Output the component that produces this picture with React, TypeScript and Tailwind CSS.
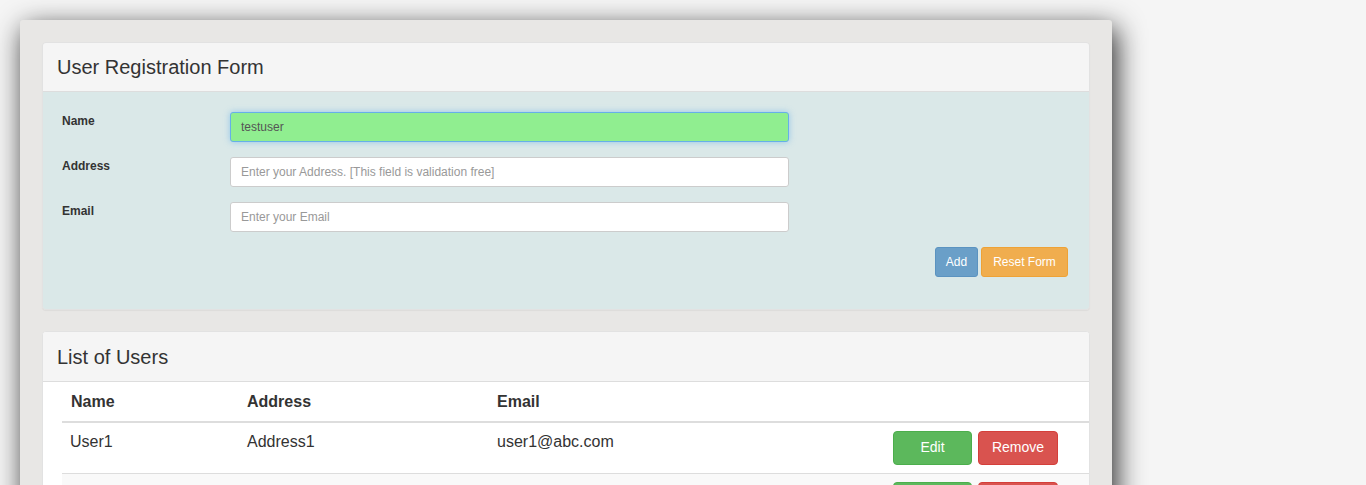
const users = [
  { name: 'User1', address: 'Address1', email: 'user1@abc.com' },
  { name: 'User2', address: 'Address2', email: 'user2@abc.com' },
];

export default function App() {
  return (
    <div className="min-h-screen bg-[#f5f5f5] p-5 font-['Liberation_Sans',Arial,sans-serif] text-[#333]">
      <div className="w-[1092px] rounded-[3px] bg-[#e8e7e5] p-[22px] shadow-[4px_8px_28px_rgba(0,0,0,0.85)]">
        {/* Registration form */}
        <div className="overflow-hidden rounded-[4px] border border-[#e2e2e2] shadow-[0_1px_1px_rgba(0,0,0,0.05)]">
          <div className="h-[49px] border-b border-[#ddd] bg-[#f5f5f5] px-[14px] pt-[12px] text-[20px] leading-[24px]">
            User Registration Form
          </div>
          <div className="bg-[#dae8e8] pl-[19px] pr-5 pt-5 pb-8">
            <div className="flex flex-col gap-[15px]">
              <div className="flex items-start">
                <label className="w-[168px] pt-[1px] text-[12px] font-bold leading-[16px]">Name</label>
                <input
                  defaultValue="testuser"
                  className="h-[30px] w-[559px] rounded-[3px] border border-[#66afe9] bg-[#90ee90] px-[10px] text-[12px] text-[#555] shadow-[0_0_6px_rgba(102,175,233,0.6)] outline-none"
                />
              </div>
              <div className="flex items-start">
                <label className="w-[168px] pt-[1px] text-[12px] font-bold leading-[16px]">Address</label>
                <input
                  placeholder="Enter your Address. [This field is validation free]"
                  className="h-[30px] w-[559px] rounded-[3px] border border-[#ccc] bg-white px-[10px] text-[12px] text-[#555] outline-none placeholder:text-[#999]"
                />
              </div>
              <div className="flex items-start">
                <label className="w-[168px] pt-[1px] text-[12px] font-bold leading-[16px]">Email</label>
                <input
                  placeholder="Enter your Email"
                  className="h-[30px] w-[559px] rounded-[3px] border border-[#ccc] bg-white px-[10px] text-[12px] text-[#555] outline-none placeholder:text-[#999]"
                />
              </div>
            </div>
            <div className="mt-[15px] flex justify-end gap-[3px] pr-[1px]">
              <button className="h-[30px] w-[43px] rounded-[3px] border border-[#5b93c0] bg-[#6a9fc8] text-[12px] text-white">
                Add
              </button>
              <button className="h-[30px] w-[87px] rounded-[3px] border border-[#eea236] bg-[#f0ad4e] text-[12px] text-white">
                Reset Form
              </button>
            </div>
          </div>
        </div>

        {/* User list */}
        <div className="mt-[21px] overflow-hidden rounded-[4px] border border-[#e2e2e2] bg-white">
          <div className="h-[50px] border-b border-[#ddd] bg-[#f5f5f5] px-[14px] pt-[13px] text-[20px] leading-[24px]">
            List of Users
          </div>
          <table className="ml-[19px] w-[1029px] border-collapse text-[16px]">
            <thead>
              <tr className="h-[40px] border-b-2 border-[#ddd]">
                <th className="w-[177px] px-[9px] pt-[1px] text-left font-bold">Name</th>
                <th className="w-[250px] px-2 pt-[1px] text-left font-bold">Address</th>
                <th className="px-2 pt-[1px] text-left font-bold">Email</th>
                <th className="w-[200px]"></th>
              </tr>
            </thead>
            <tbody>
              {users.map((u, i) => (
                <tr key={u.name} className={'h-[51px] border-b border-[#ddd] ' + (i % 2 ? 'bg-[#f9f9f9]' : 'bg-white')}>
                  <td className="px-2 pb-[12px] align-middle">{u.name}</td>
                  <td className="px-2 pb-[12px] align-middle">{u.address}</td>
                  <td className="px-2 pb-[12px] align-middle">{u.email}</td>
                  <td className="pr-[33px] text-right align-middle">
                    <div className="flex justify-end gap-[6px]">
                      <button className="h-[34px] w-[79px] rounded-[4px] border border-[#4cae4c] bg-[#5cb85c] text-[14px] text-white">
                        Edit
                      </button>
                      <button className="h-[34px] w-[80px] rounded-[4px] border border-[#d43f3a] bg-[#d9534f] text-[14px] text-white">
                        Remove
                      </button>
                    </div>
                  </td>
                </tr>
              ))}
            </tbody>
          </table>
        </div>
      </div>
    </div>
  );
}
